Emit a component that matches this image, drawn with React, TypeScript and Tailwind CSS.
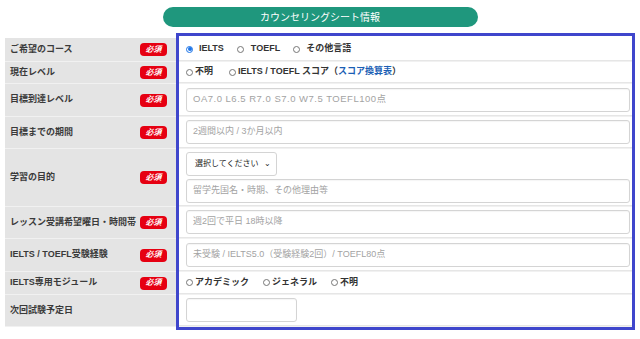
import React from 'react';

const font = { fontFamily: '"Liberation Sans", "Noto Sans CJK JP", sans-serif' };

function Badge() {
  return (
    <span className="flex h-[13px] w-[27px] items-center justify-center rounded-[4px] bg-[#e60012] text-[8px] font-bold italic leading-none text-white">
      必須
    </span>
  );
}

function Radio({ checked = false, label, gap = 'ml-[6px]' }: { checked?: boolean; label: React.ReactNode; gap?: string }) {
  return (
    <span className="flex items-center">
      {checked ? (
        <span className="flex h-[7px] w-[7px] items-center justify-center rounded-full border border-[#1a73e8] bg-white">
          <span className="h-[4px] w-[4px] rounded-full bg-[#1a73e8]" />
        </span>
      ) : (
        <span className="h-[7px] w-[7px] rounded-full border border-[#767676] bg-white" />
      )}
      <span className={`${gap} whitespace-nowrap text-[9px] font-bold text-[#333]`}>{label}</span>
    </span>
  );
}

function Field({ placeholder, className = 'w-[444px]', textClass = 'text-[9px]' }: { placeholder?: string; className?: string; textClass?: string }) {
  return (
    <div className={`flex h-[24px] items-center rounded-[3px] border border-[#d4d4d4] bg-white px-[6px] shadow-[inset_0_1px_1px_rgba(0,0,0,0.04)] ${className}`}>
      <span className={`whitespace-nowrap text-[#a3a3a3] ${textClass}`}>{placeholder}</span>
    </div>
  );
}

function Row({ label, h, required = true, children }: { label: string; h: string; required?: boolean; children: React.ReactNode }) {
  return (
    <div className={`flex ${h} border-b-[1px] border-[#f1f1f1]`}>
      <div className="flex w-[171px] shrink-0 items-center justify-between bg-[#e4e4e4] pl-[5px] pr-[9px]">
        <span className="text-[9px] font-bold text-[#3a3a3a]">{label}</span>
        {required && <Badge />}
      </div>
      <div className="flex flex-1 flex-col justify-center gap-[3px] border-b border-[#e6e6e6] bg-white pl-[10px]">{children}</div>
    </div>
  );
}

export default function App() {
  return (
    <div className="relative h-[339px] w-[640px] bg-white" style={font}>
      <div className="flex justify-center pt-[7px]">
        <div className="flex h-[20px] w-[315px] items-center justify-center rounded-full bg-[#1f977d] text-[10px] text-white">
          カウンセリングシート情報
        </div>
      </div>

      <div className="ml-[5px] mt-[11px] w-[627px]">
        <Row label="ご希望のコース" h="h-[24px]">
          <div className="flex items-center gap-[13px]">
            <Radio checked label="IELTS" />
            <Radio label="TOEFL" gap="ml-[7px]" />
            <Radio label="その他言語" />
          </div>
        </Row>
        <Row label="現在レベル" h="h-[22px]">
          <div className="flex items-center gap-[16px]">
            <Radio label="不明" gap="ml-[2px]" />
            <Radio
              gap="ml-[2px]"
              label={
                <>
                  IELTS / TOEFL スコア（<span className="text-[#1b5fb5]">スコア換算表</span>）
                </>
              }
            />
          </div>
        </Row>
        <Row label="目標到達レベル" h="h-[33px]">
          <Field placeholder="OA7.0 L6.5 R7.0 S7.0 W7.5  TOEFL100点" textClass="text-[9.5px] tracking-[0.5px]" />
        </Row>
        <Row label="目標までの期間" h="h-[32px]">
          <Field placeholder="2週間以内 / 3か月以内" />
        </Row>
        <Row label="学習の目的" h="h-[58px]">
          <div className="flex h-[24px] w-[91px] items-center justify-between whitespace-nowrap rounded-[3px] border border-[#d4d4d4] bg-white pl-[8px] pr-[5px] text-[8px] text-[#222]">
            <span>選択してください</span>
            <span className="text-[8px]">⌄</span>
          </div>
          <Field placeholder="留学先国名・時期、その他理由等" />
        </Row>
        <Row label="レッスン受講希望曜日・時間帯" h="h-[32px]">
          <Field placeholder="週2回で平日 18時以降" />
        </Row>
        <Row label="IELTS / TOEFL受験経験" h="h-[33px]">
          <Field placeholder="未受験 / IELTS5.0（受験経験2回）/ TOEFL80点" />
        </Row>
        <Row label="IELTS専用モジュール" h="h-[23px]">
          <div className="flex items-center gap-[14px]">
            <Radio label="アカデミック" gap="ml-[2px]" />
            <Radio label="ジェネラル" gap="ml-[2px]" />
            <Radio label="不明" gap="ml-[2px]" />
          </div>
        </Row>
        <Row label="次回試験予定日" h="h-[32px]" required={false}>
          <Field className="w-[111px]" />
        </Row>
      </div>

      <div className="pointer-events-none absolute left-[176px] top-[33px] h-[297px] w-[459px] border-[3px] border-[#3f46cc]" />
    </div>
  );
}
